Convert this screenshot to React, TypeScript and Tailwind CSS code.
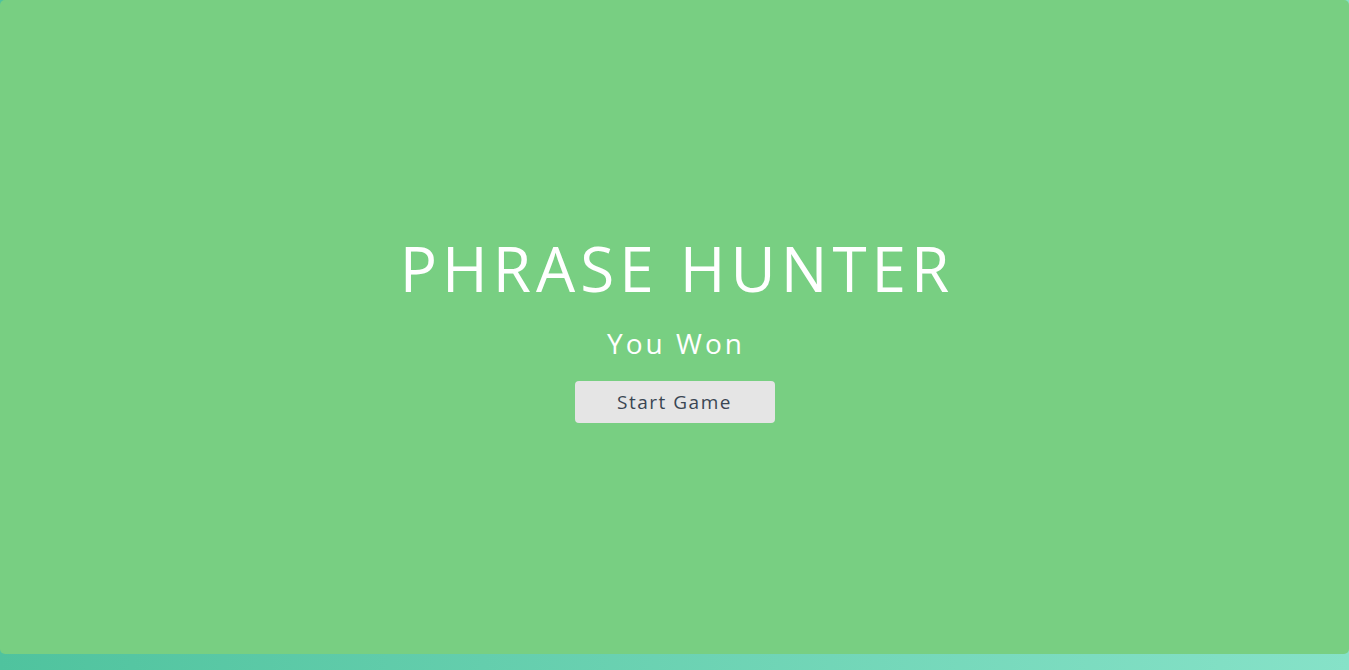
export default function App() {
  return (
    <div className="h-[670px] w-full overflow-hidden bg-gradient-to-r from-[#4fc39e] to-[#86e2c8]">
      <div
        className="flex h-[654px] w-full flex-col items-center justify-center rounded-[5px] bg-[#78cf82] pt-[6px] text-white"
        style={{ fontFamily: '"Open Sans", Lato, sans-serif' }}
      >
        <h1 className="pl-[5px] text-[62px] font-normal leading-none tracking-[5px]">PHRASE HUNTER</h1>
        <h2 className="mt-[30px] pl-[3px] text-[28px] font-normal leading-none tracking-[3px]">You Won</h2>
        <button className="mt-[24px] h-[42px] w-[200px] rounded-[4px] bg-[#e5e5e5] text-[19px] tracking-[1.5px] text-[#3a4653]">
          Start Game
        </button>
      </div>
    </div>
  );
}
